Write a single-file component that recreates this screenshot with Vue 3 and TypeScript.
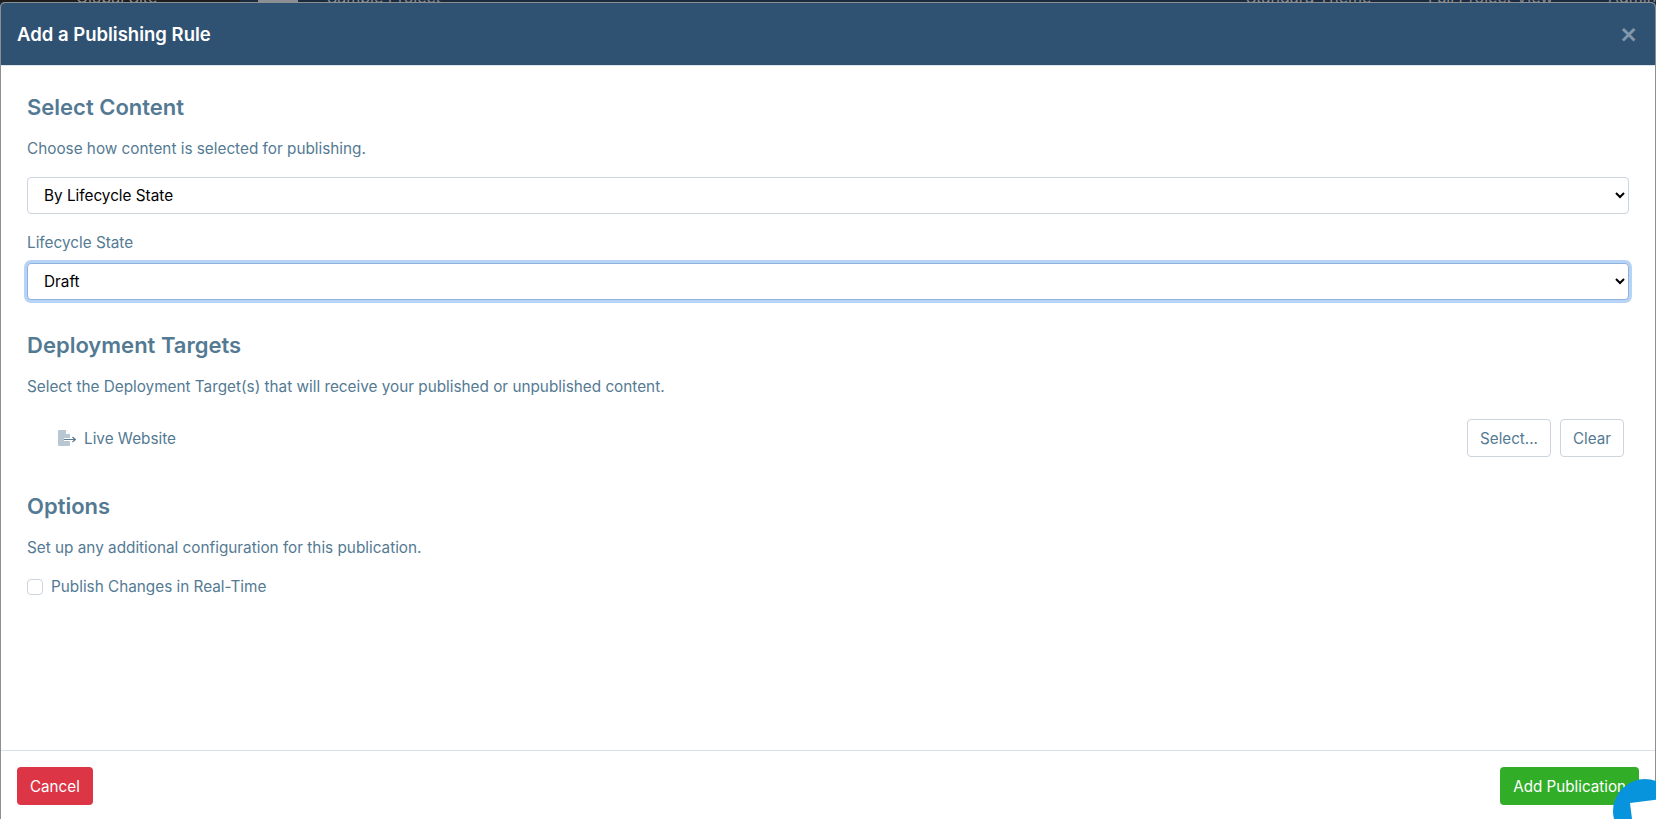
<script setup lang="ts">
const title = 'Add a Publishing Rule'
</script>

<template>
  <div class="page">
    <div class="backdrop">
      <div class="bar-left"><span class="bar-text">Global Site</span></div>
      <div class="bar-mid"><span class="bar-chip"></span><span class="bar-text mid-text">Sample Project</span></div>
      <div class="bar-right">
        <span class="bar-text theme">Standard Theme</span>
        <span class="bar-text view">Full Project View</span>
        <span class="bar-text admin">Admin</span>
      </div>
    </div>
    <div class="modal">
      <header class="modal-header">
        <h5>{{ title }}</h5>
        <span class="close">×</span>
      </header>
      <main class="modal-body">
        <h4>Select Content</h4>
        <p>Choose how content is selected for publishing.</p>
        <select class="control first-control">
          <option>By Lifecycle State</option>
        </select>
        <label class="field-label">Lifecycle State</label>
        <select class="control focused">
          <option>Draft</option>
        </select>

        <h4 class="section">Deployment Targets</h4>
        <p>Select the Deployment Target(s) that will receive your published or unpublished content.</p>
        <div class="target-row">
          <div class="target">
            <svg width="18" height="16" viewBox="0 0 18 16">
              <path d="M1 0h7l4 4v11a1 1 0 0 1-1 1H1a1 1 0 0 1-1-1V1a1 1 0 0 1 1-1z" fill="#b9c7d2" />
              <path d="M8 0v4h4z" fill="#fff" />
              <path d="M6 9.5h11M14.5 7l2.8 2.5-2.8 2.5" fill="none" stroke="#fff" stroke-width="3" />
              <path d="M6 9.5h11M14.5 7l2.8 2.5-2.8 2.5" fill="none" stroke="#557a94" stroke-width="1.2" />
            </svg>
            <span>Live Website</span>
          </div>
          <div class="target-buttons">
            <button class="btn outline">Select...</button>
            <button class="btn outline">Clear</button>
          </div>
        </div>

        <h4 class="section options">Options</h4>
        <p>Set up any additional configuration for this publication.</p>
        <label class="check">
          <span class="box"></span>
          <span>Publish Changes in Real-Time</span>
        </label>
      </main>
      <footer class="modal-footer">
        <button class="btn danger">Cancel</button>
        <button class="btn success">Add Publication</button>
      </footer>
    </div>
    <div class="chat">
      <svg width="64" height="64" viewBox="0 0 64 64">
        <path d="M17 24l33-4 4 44H22z" fill="#fff" />
      </svg>
    </div>
  </div>
</template>

<style scoped>
.page {
  position: relative;
  width: 1656px;
  height: 819px;
  overflow: hidden;
  display: flex;
  flex-direction: column;
  background: #1c2530;
  font-family: Inter, "Liberation Sans", sans-serif;
  color: #547a93;
}
.backdrop {
  height: 2px;
  flex: none;
  display: flex;
  overflow: hidden;
  background: #1b2a3d;
}
.bar-left { width: 240px; flex: none; padding-left: 76px; box-sizing: border-box; background: #1d1d1d; }
.bar-mid { width: 985px; flex: none; display: flex; box-sizing: border-box; padding-left: 18px; }
.bar-chip { width: 40px; height: 2px; background: #8c8f93; flex: none; }
.mid-text { margin-left: 29px; font-size: 21px; }
.bar-right { flex: 1; display: flex; }
.bar-text {
  display: block;
  font-size: 16px;
  line-height: 16px;
  height: 16px;
  margin-top: -11px;
  color: #8c8f93;
  white-space: nowrap;
  flex: none;
}
.theme { width: 184px; padding-left: 21px; box-sizing: border-box; }
.view { width: 180px; padding-left: 19px; box-sizing: border-box; }
.admin { padding-left: 19px; }
.modal {
  flex: 1;
  display: flex;
  flex-direction: column;
  background: #fff;
  border-top: 1px solid #8b8f94;
  border-left: 1px solid #8b8f94;
  border-right: 1px solid #8b8f94;
  border-radius: 5px 5px 0 0;
  min-height: 0;
  overflow: hidden;
}
.modal-header {
  flex: none;
  height: 62px;
  background: #305272;
  color: #fff;
  display: flex;
  align-items: center;
  justify-content: space-between;
  padding: 0 17px 0 16px;
  border-bottom: 1px solid #dee5ec;
}
.modal-header h5 {
  margin: 0;
  font-size: 18.5px;
  font-weight: 600;
}
.close {
  font-size: 28px;
  line-height: 1;
  font-weight: 500;
  margin-top: -2px;
  color: #8398ac;
}
.modal-body {
  flex: 1;
  padding: 0 26px;
  min-height: 0;
}
h4 {
  margin: 0;
  font-size: 22px;
  font-weight: 600;
  line-height: 26px;
  padding-top: 28px;
}
h4.section { padding-top: 0; margin-top: 32px; }
h4.options { margin-top: 36px; }
p {
  margin: 18px 0 0;
  font-size: 15.3px;
  line-height: 22px;
}
.control {
  display: block;
  width: 1602px;
  height: 37px;
  box-sizing: border-box;
  padding: 0 12px;
  border: 1px solid #ccd4dd;
  border-radius: 4px;
  background: #fff;
  color: #000;
  font-family: inherit;
  font-size: 15.3px;
}
.first-control { margin-top: 17px; }
.field-label {
  display: block;
  margin-top: 18px;
  font-size: 15.3px;
  line-height: 22px;
  margin-bottom: 9px;
}
.focused {
  border-color: #8fb2dc;
  box-shadow: 0 0 0 3px #b7d4f7;
}
.target-row {
  display: flex;
  align-items: center;
  justify-content: space-between;
  margin-top: 21px;
  padding: 0 5px 0 31px;
}
.target {
  display: flex;
  align-items: center;
  gap: 8px;
  font-size: 15.3px;
}
.target-buttons { display: flex; gap: 9px; }
.btn {
  height: 38px;
  box-sizing: border-box;
  padding: 0 12px;
  border-radius: 4px;
  border: 1px solid transparent;
  font-family: inherit;
  font-size: 15.2px;
}
.outline {
  background: #fff;
  border-color: #ccd4dd;
  color: #547a93;
}
.check {
  display: flex;
  align-items: center;
  gap: 8px;
  margin-top: 17px;
  font-size: 15.3px;
  line-height: 22px;
}
.box {
  width: 16px;
  height: 16px;
  box-sizing: border-box;
  border: 1px solid #ccd4dd;
  border-radius: 4px;
}
.modal-footer {
  flex: none;
  height: 69px;
  box-sizing: border-box;
  border-top: 1px solid #d8dfe6;
  display: flex;
  align-items: flex-start;
  justify-content: space-between;
  padding: 16px;
}
.danger { background: #dc3545; color: #fff; }
.success { background: #31ad27; color: #fff; }
.chat {
  position: absolute;
  left: 1613px;
  top: 779px;
  width: 64px;
  height: 64px;
  border-radius: 50%;
  background: #0894dc;
}
.chat svg { display: block; }
</style>
